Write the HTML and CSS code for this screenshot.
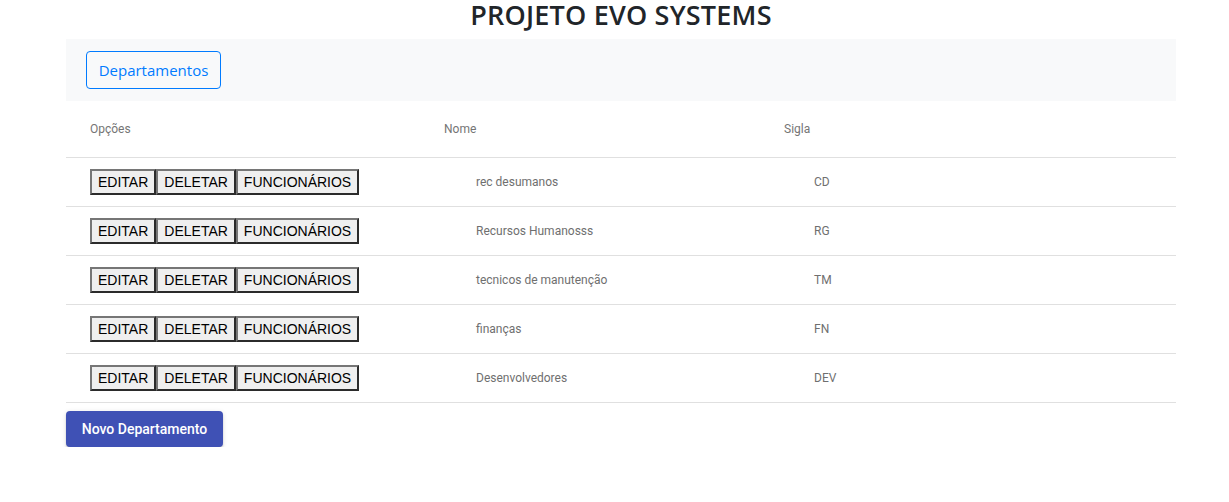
FILE: index.html
```html
<!DOCTYPE html>
<html lang="pt">
<head>
<meta charset="utf-8">
<title>Projeto Evo Systems</title>
<link rel="stylesheet" href="styles.css">
</head>
<body>
<div class="page">
  <h1 class="title">PROJETO EVO SYSTEMS</h1>
  <nav class="navbar">
    <button class="btn-outline">Departamentos</button>
  </nav>
  <div class="table">
    <div class="row head">
      <div class="cell c1">Opções</div>
      <div class="cell c2">Nome</div>
      <div class="cell c3">Sigla</div>
    </div>
    <div class="row">
      <div class="cell c1 actions"><button class="act">EDITAR</button><button class="act">DELETAR</button><button class="act">FUNCIONÁRIOS</button></div>
      <div class="cell c2 data">rec desumanos</div>
      <div class="cell c3 data">CD</div>
    </div>
    <div class="row">
      <div class="cell c1 actions"><button class="act">EDITAR</button><button class="act">DELETAR</button><button class="act">FUNCIONÁRIOS</button></div>
      <div class="cell c2 data">Recursos Humanosss</div>
      <div class="cell c3 data">RG</div>
    </div>
    <div class="row">
      <div class="cell c1 actions"><button class="act">EDITAR</button><button class="act">DELETAR</button><button class="act">FUNCIONÁRIOS</button></div>
      <div class="cell c2 data">tecnicos de manutenção</div>
      <div class="cell c3 data">TM</div>
    </div>
    <div class="row">
      <div class="cell c1 actions"><button class="act">EDITAR</button><button class="act">DELETAR</button><button class="act">FUNCIONÁRIOS</button></div>
      <div class="cell c2 data">finanças</div>
      <div class="cell c3 data">FN</div>
    </div>
    <div class="row">
      <div class="cell c1 actions"><button class="act">EDITAR</button><button class="act">DELETAR</button><button class="act">FUNCIONÁRIOS</button></div>
      <div class="cell c2 data">Desenvolvedores</div>
      <div class="cell c3 data">DEV</div>
    </div>
  </div>
  <button class="btn-primary">Novo Departamento</button>
</div>
</body>
</html>
```
FILE: styles.css
```css
* { box-sizing: border-box; }
html, body { margin: 0; padding: 0; background: #fff; }
body { font-family: "Open Sans", "Liberation Sans", sans-serif; color: #212529; }

.page {
  width: 1110px;
  margin-left: 66px;
}

.title {
  margin: 0;
  height: 39px;
  padding-bottom: 10px;
  text-align: center;
  font-family: "Open Sans", sans-serif;
  font-size: 27px;
  font-weight: 600;
  line-height: 29px;
  color: #212529;
  letter-spacing: 0.2px;
}

.navbar {
  background: #f8f9fa;
  height: 62px;
  display: flex;
  align-items: center;
  padding-left: 20px;
}

.btn-outline {
  height: 38px;
  width: 135px;
  border: 1px solid #007bff;
  border-radius: 4px;
  background: transparent;
  color: #007bff;
  font-family: "Open Sans", sans-serif;
  font-size: 15px;
  padding: 0;
  cursor: pointer;
}

.table { font-family: Roboto, "Liberation Sans", sans-serif; }

.row {
  display: flex;
  align-items: center;
  height: 49px;
  border-bottom: 1px solid #e0e0e0;
}
.row.head { height: 57px; }

.cell { font-size: 12px; color: #757575; }
.c1 { width: 354px; padding-left: 24px; }
.c2 { width: 340px; padding-left: 24px; }
.c3 { flex: 1; padding-left: 24px; }
.data { color: #6f6f6f; font-size: 12px; }
.c2.data { padding-left: 56px; }
.c3.data { padding-left: 54px; }

.actions { display: flex; }
.act {
  height: 26px;
  margin: 0;
  padding: 0 6px;
  background: #efefef;
  border: 2px solid;
  border-color: #767676 #2b2b2b #2b2b2b #767676;
  font-family: Arial, "Liberation Sans", sans-serif;
  font-size: 14px;
  color: #000;
  line-height: 20px;
}

.btn-primary {
  margin-top: 8px;
  height: 36px;
  width: 157px;
  padding: 0;
  border: none;
  border-radius: 4px;
  background: #3f51b5;
  color: #fff;
  font-family: Roboto, sans-serif;
  font-size: 14px;
  font-weight: 500;
  box-shadow: 0 3px 1px -2px rgba(0,0,0,.2), 0 2px 2px 0 rgba(0,0,0,.14), 0 1px 5px 0 rgba(0,0,0,.12);
}
```
